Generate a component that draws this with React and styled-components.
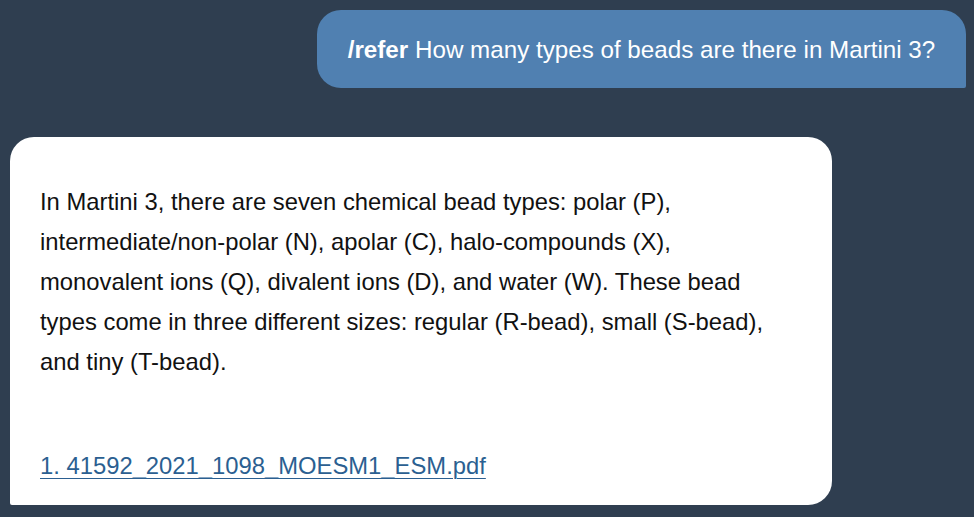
import styled, { createGlobalStyle } from 'styled-components';

const GlobalStyle = createGlobalStyle`
  html, body {
    margin: 0;
    padding: 0;
    background: #2f3e50;
  }
  body {
    font-family: "Liberation Sans", Arial, Helvetica, sans-serif;
  }
`;

const Chat = styled.main`
  width: 974px;
  height: 517px;
  box-sizing: border-box;
  padding: 10px 8px 0 10px;
  display: flex;
  flex-direction: column;
  gap: 49px;
  background: #2f3e50;
  overflow: hidden;
`;

const Bubble = styled.div`
  box-sizing: border-box;
  align-self: ${(p) => (p.$mine ? 'flex-end' : 'flex-start')};
  background: ${(p) => (p.$mine ? '#5080b1' : '#ffffff')};
  color: ${(p) => (p.$mine ? '#ffffff' : '#111111')};
  border-radius: ${(p) => (p.$mine ? '24px 24px 2px 24px' : '24px 24px 24px 2px')};
  font-size: 23.8px;
`;

const Question = styled(Bubble)`
  width: 649px;
  height: 78px;
  display: flex;
  align-items: center;
  justify-content: center;
  padding-top: 2px;
  font-size: 24.2px;
  white-space: pre;

  strong {
    font-weight: 700;
  }
`;

const Answer = styled(Bubble)`
  width: 822px;
  height: 368px;
  padding: 45px 50px 0 30px;
`;

const Paragraph = styled.p`
  margin: 0;
  line-height: 40px;
`;

const Sources = styled.p`
  margin: 64px 0 0;
  line-height: 40px;

  a {
    color: #2b5f91;
    text-decoration: underline;
    text-decoration-thickness: 1px;
    text-underline-offset: 4px;
  }
`;

const App = () => {
  return (
    <>
      <GlobalStyle />
      <Chat>
        <Question $mine>
          <strong>/refer</strong> How many types of beads are there in Martini 3?
        </Question>
        <Answer>
          <Paragraph>
            In Martini 3, there are seven chemical bead types: polar (P),
            intermediate/non-polar (N), apolar (C), halo-compounds (X),
            monovalent ions (Q), divalent ions (D), and water (W). These bead
            types come in three different sizes: regular (R-bead), small (S-bead),
            and tiny (T-bead).
          </Paragraph>
          <Sources>
            <a href="#">1. 41592_2021_1098_MOESM1_ESM.pdf</a>
          </Sources>
        </Answer>
      </Chat>
    </>
  );
};

export default App;
